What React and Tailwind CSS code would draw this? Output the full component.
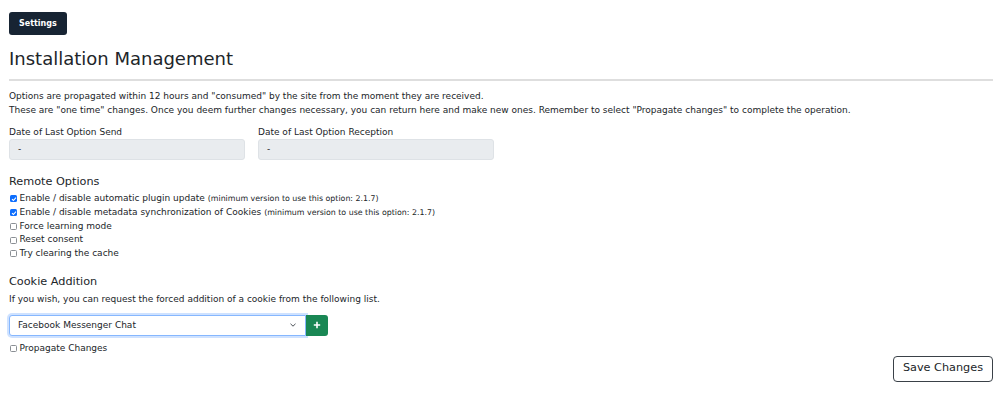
import React from "react";

function Check({ checked }) {
  return checked ? (
    <span className="inline-flex w-[7px] h-[7px] shrink-0 rounded-[1.5px] bg-[#0d6efd] items-center justify-center">
      <svg width="6" height="6" viewBox="0 0 6 6">
        <path d="M1 3.1 L2.4 4.5 L5 1.6" stroke="#fff" strokeWidth="1.1" fill="none" />
      </svg>
    </span>
  ) : (
    <span className="inline-block w-[7px] h-[7px] shrink-0 rounded-[1.5px] border border-[#8a8f94] bg-white" />
  );
}

function Row({ checked, children, note }) {
  return (
    <div className="flex items-center leading-[13.75px]">
      <span className="mr-[2.5px] flex items-center">
        <Check checked={checked} />
      </span>
      <span>{children}</span>
      {note && <span className="ml-[3px] text-[7.875px]">{note}</span>}
    </div>
  );
}

export default function App() {
  return (
    <div className="w-[1000px] h-[395px] bg-white pl-[10px] pr-[7px] pt-[12px] font-['DejaVu_Sans',sans-serif] text-[9px] leading-[1.5] text-[#212529]">
      <button className="-ml-[1px] h-[23px] px-[10px] rounded-[3px] bg-[#172433] text-white text-[8px] font-bold">
        Settings
      </button>
      <h2 className="-ml-[1px] mt-[13px] text-[18px] leading-[1.2] font-normal">Installation Management</h2>
      <div className="-ml-[1px] mt-[9px] h-[2px] bg-[#dedede]" />
      <div className="-ml-[1px]">
        <p className="mt-[9.5px]">
          Options are propagated within 12 hours and "consumed" by the site from the moment they are received.
          <br />
          These are "one time" changes. Once you deem further changes necessary, you can return here and make new ones. Remember to select "Propagate changes" to complete the operation.
        </p>
        <div className="mt-[9px] flex gap-[13px]">
          <div className="w-[236px]">
            <div>Date of Last Option Send</div>
            <div className="-mt-[0.5px] h-[21px] rounded-[3px] border border-[#dee2e6] bg-[#e9ecef] pl-[8px] flex items-center">-</div>
          </div>
          <div className="w-[236px]">
            <div>Date of Last Option Reception</div>
            <div className="-mt-[0.5px] h-[21px] rounded-[3px] border border-[#dee2e6] bg-[#e9ecef] pl-[8px] flex items-center">-</div>
          </div>
        </div>
        <h5 className="mt-[15px] text-[11.25px] leading-[1.2]">Remote Options</h5>
      </div>
      <div className="mt-[3.5px]">
        <Row checked note="(minimum version to use this option: 2.1.7)">Enable / disable automatic plugin update</Row>
        <Row checked note="(minimum version to use this option: 2.1.7)">Enable / disable metadata synchronization of Cookies</Row>
        <Row>Force learning mode</Row>
        <Row>Reset consent</Row>
        <Row>Try clearing the cache</Row>
      </div>
      <div className="-ml-[1px]">
        <h5 className="mt-[14.5px] text-[11.25px] leading-[1.2]">Cookie Addition</h5>
        <p className="mt-[4.5px]">If you wish, you can request the forced addition of a cookie from the following list.</p>
        <div className="mt-[8px] flex">
          <div className="w-[297px] h-[21px] rounded-l-[3px] border border-[#86b7fe] shadow-[0_0_0_2px_rgba(13,110,253,0.2)] bg-white flex items-center pl-[8px] pr-[8px] justify-between">
            <span>Facebook Messenger Chat</span>
            <svg width="8" height="6" viewBox="0 0 8 6">
              <path d="M1.5 1.8 L4 4.2 L6.5 1.8" stroke="#4b5157" strokeWidth="1" fill="none" />
            </svg>
          </div>
          <div className="w-[22px] h-[21px] rounded-r-[3px] bg-[#198754] flex items-center justify-center">
            <svg width="8" height="8" viewBox="0 0 8 8">
              <path d="M4 0.8 V7.2 M0.8 4 H7.2" stroke="#fff" strokeWidth="1.6" />
            </svg>
          </div>
        </div>
      </div>
      <div className="mt-[6px]">
        <Row>Propagate Changes</Row>
      </div>
      <div className="flex justify-end">
        <button className="h-[26px] px-[9px] rounded-[4px] border border-[#3a4148] bg-white text-[11.25px] text-[#212529]">
          Save Changes
        </button>
      </div>
    </div>
  );
}
